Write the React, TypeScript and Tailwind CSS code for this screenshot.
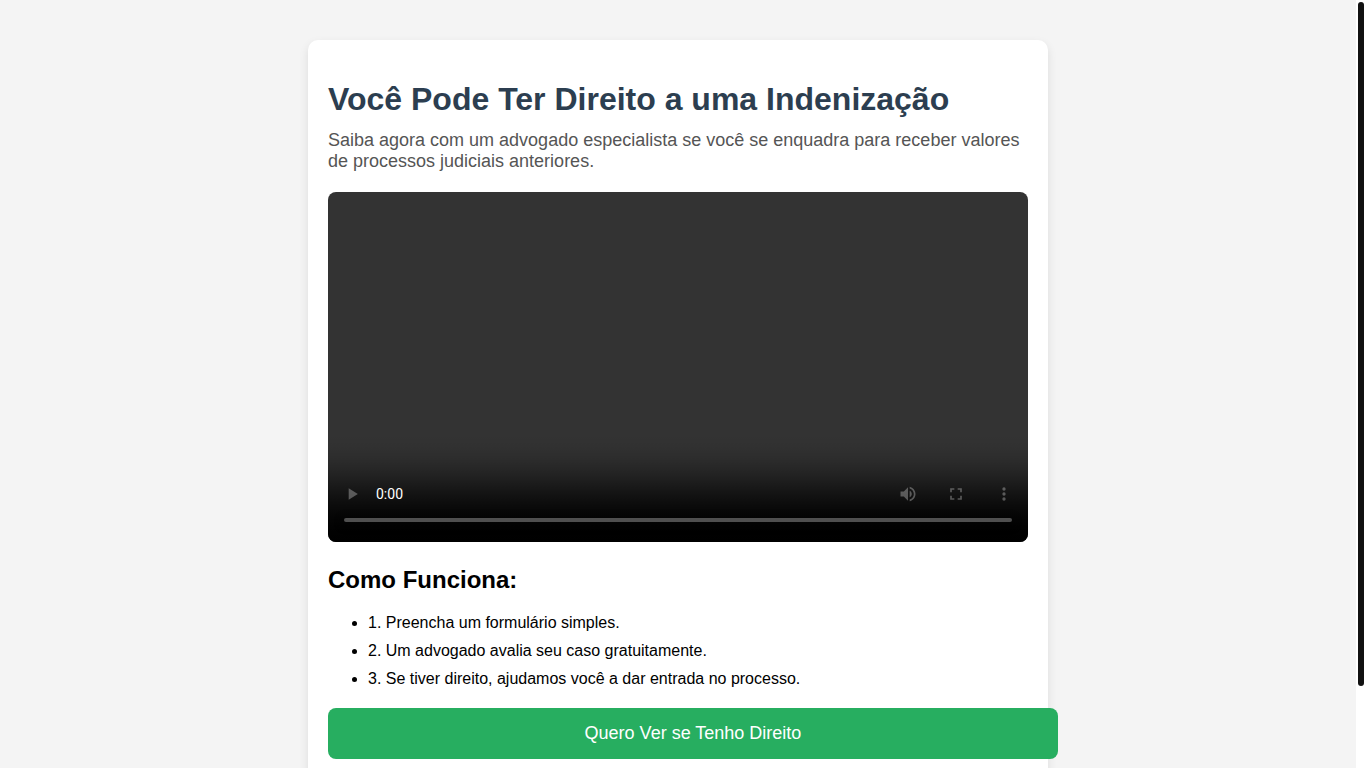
const steps = [
  "1. Preencha um formulário simples.",
  "2. Um advogado avalia seu caso gratuitamente.",
  "3. Se tiver direito, ajudamos você a dar entrada no processo.",
];

function Scrollbar() {
  return (
    <div className="w-2.5 shrink-0 bg-white p-0.5" aria-hidden="true">
      <div className="h-[89.5%] w-1.5 rounded-full bg-[#111111]" />
    </div>
  );
}

export default function App() {
  return (
    <div className="flex h-screen overflow-hidden bg-[#f4f4f4] font-['Liberation_Sans',Arial,sans-serif] text-base text-black">
      <div className="min-w-0 flex-1 overflow-y-auto [scrollbar-width:none]">
        <main className="mx-auto my-10 max-w-[740px] rounded-[10px] bg-white px-5 pt-10 pb-10 shadow-[0_4px_10px_rgba(0,0,0,0.1)]">
          <h1 className="text-[32px] leading-[38px] font-bold text-[#2c3e50]">
            Você Pode Ter Direito a uma Indenização
          </h1>
          <p className="mt-3 text-[18px] leading-[21px] text-[#555555]">
            Saiba agora com um advogado especialista se você se enquadra para receber valores de
            processos judiciais anteriores.
          </p>
          <video
            controls
            aria-label="Vídeo de apresentação"
            className="mt-5 aspect-[2/1] w-full rounded-lg"
          />
          <h2 className="mt-6 text-2xl leading-7 font-bold">Como Funciona:</h2>
          <ul className="mt-5 list-disc space-y-2.5 pl-10 leading-[18px]">
            {steps.map((step) => (
              <li key={step}>{step}</li>
            ))}
          </ul>
          <button
            type="button"
            className="mt-5 -mr-[30px] block w-[calc(100%+30px)] cursor-pointer rounded-lg bg-[#27ae60] p-[15px] text-center text-[18px] leading-[21px] text-white"
          >
            Quero Ver se Tenho Direito
          </button>
        </main>
      </div>
      <Scrollbar />
    </div>
  );
}
